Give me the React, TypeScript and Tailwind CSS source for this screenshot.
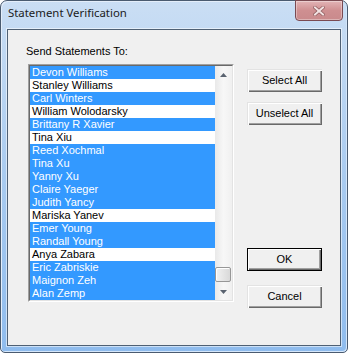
const people: [string, boolean][] = [
  ['Devon Williams', true],
  ['Stanley Williams', false],
  ['Carl Winters', true],
  ['William Wolodarsky', false],
  ['Brittany R Xavier', true],
  ['Tina Xiu', false],
  ['Reed Xochmal', true],
  ['Tina Xu', true],
  ['Yanny Xu', true],
  ['Claire Yaeger', true],
  ['Judith Yancy', true],
  ['Mariska Yanev', false],
  ['Emer Young', true],
  ['Randall Young', true],
  ['Anya Zabara', false],
  ['Eric Zabriskie', true],
  ['Maignon Zeh', true],
  ['Alan Zemp', true],
]

const sans = "font-['Liberation_Sans',Arial,sans-serif] text-[11px]"

export default function App() {
  return (
    <div className="h-[353px] w-[348px] bg-white">
      <div className="relative flex h-[353px] w-[348px] flex-col rounded-t-[7px] rounded-b-[5px] border border-[#4a5b70] bg-gradient-to-b from-[#cadef4] via-[#a9cbf0] to-[#8fbcee] px-[6px] pb-[6px] shadow-[inset_1px_1px_0_#e4eefa,inset_-1px_-1px_0_#d4e6fa]">
        <div className="flex h-[28px] items-start">
          <span className="mt-[4px] pl-[1px] font-['Noto_Sans',sans-serif] text-[11.4px] leading-[16px] text-[#1b1b1b]">
            Statement Verification
          </span>
        </div>
        <CloseButton />

        <div className="flex flex-1 border border-[#4f6074] bg-[#f0f0f0] shadow-[0_0_0_1px_rgba(255,255,255,0.55)]">
          <div className="flex flex-col pl-[18px] pt-[15px]">
            <p className={`${sans} leading-[13px] text-black`}>Send Statements To:</p>
            <div className="mt-[6px] ml-[2px] flex border-t border-l border-[#a0a0a0] border-r border-b border-r-white border-b-white">
              <div className="flex border-t border-l border-[#696969] border-r border-b border-r-[#e3e3e3] border-b-[#e3e3e3] bg-white">
                <ul className={`${sans} w-[185px] leading-[13px]`}>
                  {people.map(([name, on]) => (
                    <li
                      key={name}
                      className={`h-[13px] whitespace-nowrap pl-[2px] ${on ? 'bg-[#3399ff] text-white' : 'bg-white text-black'}`}
                    >
                      {name}
                    </li>
                  ))}
                </ul>
                <Scrollbar />
              </div>
            </div>
          </div>

          <div className="ml-[13px] flex flex-col pt-[39px]">
            <Button label="Select All" />
            <div className="mt-[10px]">
              <Button label="Unselect All" />
            </div>
            <div className="mt-[123px]">
              <Button label="OK" primary />
            </div>
            <div className="mt-[14px]">
              <Button label="Cancel" />
            </div>
          </div>
        </div>
      </div>
    </div>
  )
}

function CloseButton() {
  return (
    <div className="absolute right-[4px] top-[-1px] flex h-[21px] w-[48px] items-center justify-center rounded-b-[4px] border border-[#7a4a52] bg-gradient-to-b from-[#e2b4b6] via-[#cf8f91] to-[#c98a8c] shadow-[inset_0_0_0_1px_rgba(255,255,255,0.35)]">
      <svg width="12" height="10" viewBox="0 0 12 10">
        <path d="M2 1.5 L10 8.5 M10 1.5 L2 8.5" stroke="#8d5a5c" strokeWidth="3.4" strokeLinecap="square" />
        <path d="M2 1.5 L10 8.5 M10 1.5 L2 8.5" stroke="#f3e3e3" strokeWidth="2" strokeLinecap="square" />
      </svg>
    </div>
  )
}

function Scrollbar() {
  return (
    <div className="flex w-[17px] flex-col bg-gradient-to-r from-[#e9e9e9] via-[#f7f7f7] to-[#f0f0f0]">
      <div className="flex h-[17px] items-center justify-center">
        <Arrow up />
      </div>
      <div className="flex flex-1 flex-col justify-end pb-[1px] pr-[1px]">
        <div className="h-[15px] rounded-[2px] border border-[#979797] bg-gradient-to-r from-[#f2f2f2] to-[#d9d9d9] shadow-[inset_1px_1px_0_#ffffff]" />
      </div>
      <div className="flex h-[17px] items-center justify-center">
        <Arrow />
      </div>
    </div>
  )
}

function Arrow({ up }: { up?: boolean }) {
  return (
    <svg width="7" height="4" viewBox="0 0 7 4">
      <path d={up ? 'M3.5 0 L7 4 L0 4 Z' : 'M0 0 L7 0 L3.5 4 Z'} fill="#5a6370" />
    </svg>
  )
}

function Button({ label, primary }: { label: string; primary?: boolean }) {
  return (
    <div
      className={`flex h-[23px] w-[75px] items-center justify-center bg-[#f0f0f0] ${sans} leading-[13px] text-black ${
        primary
          ? 'border border-black shadow-[inset_1px_1px_0_#ffffff,inset_-1px_-1px_0_#696969,inset_-2px_-2px_0_#a0a0a0]'
          : 'shadow-[inset_1px_1px_0_#e3e3e3,inset_2px_2px_0_#ffffff,inset_-1px_-1px_0_#696969,inset_-2px_-2px_0_#a0a0a0]'
      }`}
    >
      {label}
    </div>
  )
}
